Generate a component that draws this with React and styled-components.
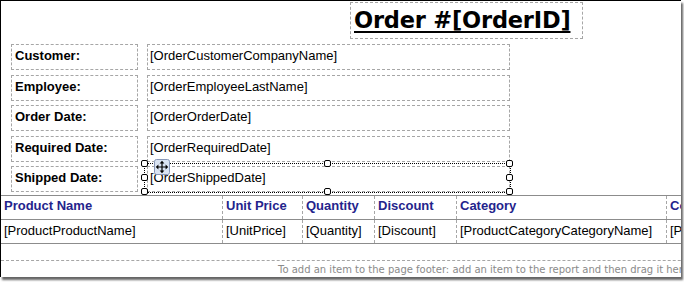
import React from "react";
import styled, { createGlobalStyle } from "styled-components";

const Global = createGlobalStyle`
  html, body { margin: 0; padding: 0; background: #fff; }
  body { width: 684px; height: 282px; overflow: hidden; }
`;

const Window = styled.div`
  position: relative;
  width: 681px;
  height: 277px;
  box-sizing: border-box;
  border-top: 1px solid #000;
  border-left: 1px solid #000;
  background: #fff;
  box-shadow: 2px 3px 2px rgba(0, 0, 0, 0.6);
  overflow: hidden;
  display: flex;
  flex-direction: column;
  font-family: "Liberation Sans", Arial, sans-serif;
`;

const PageHeader = styled.section`
  height: 194px;
  flex: none;
  display: flex;
  flex-direction: column;
`;

const TitleBox = styled.div`
  margin: 1px 0 0 349px;
  width: 233px;
  height: 37px;
  box-sizing: border-box;
  border: 1px dashed #a6a6a6;
  padding-left: 3px;
  display: flex;
  align-items: center;
`;

const Title = styled.span`
  font-family: "DejaVu Sans", Verdana, sans-serif;
  font-weight: bold;
  font-size: 22.5px;
  letter-spacing: -0.2px;
  color: #000;
  text-decoration: underline;
  text-decoration-thickness: 2px;
  text-underline-offset: 3px;
  line-height: 1;
`;

const FieldGrid = styled.div`
  margin: 5px 0 0 10px;
  display: grid;
  grid-template-columns: 127px 363px;
  grid-auto-rows: 26px;
  column-gap: 9px;
  row-gap: 4.5px;
`;

const Box = styled.div`
  position: relative;
  box-sizing: border-box;
  border: 1px dashed #a6a6a6;
  display: flex;
  align-items: center;
  padding: 0 0 3px ${(p) => (p.$label ? "3px" : "2px")};
  font-size: 13px;
  font-weight: ${(p) => (p.$label ? "bold" : "normal")};
  color: #000;
  white-space: nowrap;
`;

const Selection = styled.div`
  position: absolute;
  top: -4px;
  left: -4px;
  right: -2px;
  bottom: -2px;
  border: 1px dotted #000;
  pointer-events: none;
`;

const Handle = styled.span`
  position: absolute;
  left: ${(p) => p.$x}%;
  top: ${(p) => p.$y}%;
  width: 7px;
  height: 7px;
  margin: -4px 0 0 -4px;
  box-sizing: border-box;
  border: 1px solid #000;
  border-radius: 2px;
  background: #fff;
`;

const MoveGrip = styled.svg`
  position: absolute;
  left: 9px;
  top: -5px;
  width: 16px;
  height: 16px;
`;

const Table = styled.div`
  width: 780px;
  flex: none;
  border-top: 1px solid #8c8c8c;
`;

const Row = styled.div`
  display: flex;
  height: 23px;
  border-bottom: 1px solid #8c8c8c;
`;

const Cell = styled.div`
  flex: none;
  width: ${(p) => p.$w}px;
  box-sizing: border-box;
  border-right: 1px dashed #a6a6a6;
  padding: 0 0 ${(p) => (p.$head ? "4px" : "2px")} 3px;
  display: flex;
  align-items: center;
  font-size: 13px;
  font-weight: ${(p) => (p.$head ? "bold" : "normal")};
  color: ${(p) => (p.$head ? "#24248c" : "#000")};
  white-space: nowrap;
  overflow: hidden;
`;

const Spacer = styled.div`
  height: 16px;
  flex: none;
  border-bottom: 1px dashed #a6a6a6;
  width: 780px;
`;

const Footer = styled.div`
  height: 16px;
  flex: none;
  padding-left: 277px;
  display: flex;
  align-items: center;
  font-family: "DejaVu Sans", Tahoma, sans-serif;
  font-size: 10px;
  color: #8a8a8a;
  white-space: nowrap;
`;

const fields = [
  ["Customer:", "[OrderCustomerCompanyName]"],
  ["Employee:", "[OrderEmployeeLastName]"],
  ["Order Date:", "[OrderOrderDate]"],
  ["Required Date:", "[OrderRequiredDate]"],
  ["Shipped Date:", "[OrderShippedDate]", true],
];

const columns = [
  ["Product Name", "[ProductProductName]", 222],
  ["Unit Price", "[UnitPrice]", 80],
  ["Quantity", "[Quantity]", 72],
  ["Discount", "[Discount]", 82],
  ["Category", "[ProductCategoryCategoryName]", 210],
  ["Company", "[ProductSupplierCompanyName]", 160],
];

const handles = [
  [0, 0], [50, 0], [100, 0],
  [0, 50], [100, 50],
  [0, 100], [50, 100], [100, 100],
];

function MoveIcon() {
  return (
    <MoveGrip viewBox="0 0 16 16">
      <rect x="0.5" y="0.5" width="15" height="15" rx="2" fill="#d9e3f2" stroke="#8796b6" />
      <path d="M8 3.5V12.5M3.5 8H12.5" stroke="#000" strokeWidth="1.2" />
      <path d="M8 1.8L5.6 4.4H10.4Z M8 14.2L5.6 11.6H10.4Z M1.8 8L4.4 5.6V10.4Z M14.2 8L11.6 5.6V10.4Z" fill="#000" />
    </MoveGrip>
  );
}

export default function App() {
  return (
    <>
      <Global />
      <Window>
        <PageHeader>
          <TitleBox>
            <Title>Order #[OrderID]</Title>
          </TitleBox>
          <FieldGrid>
            {fields.map(([label, value, selected]) => (
              <React.Fragment key={label}>
                <Box $label>{label}</Box>
                <Box>
                  {value}
                  {selected && (
                    <Selection>
                      {handles.map(([x, y]) => (
                        <Handle key={`${x}-${y}`} $x={x} $y={y} />
                      ))}
                      <MoveIcon />
                    </Selection>
                  )}
                </Box>
              </React.Fragment>
            ))}
          </FieldGrid>
        </PageHeader>
        <Table>
          <Row>
            {columns.map(([h, , w]) => (
              <Cell key={h} $w={w} $head>{h}</Cell>
            ))}
          </Row>
          <Row>
            {columns.map(([h, d, w]) => (
              <Cell key={h} $w={w}>{d}</Cell>
            ))}
          </Row>
        </Table>
        <Spacer />
        <Footer>To add an item to the page footer: add an item to the report and then drag it here</Footer>
      </Window>
    </>
  );
}
